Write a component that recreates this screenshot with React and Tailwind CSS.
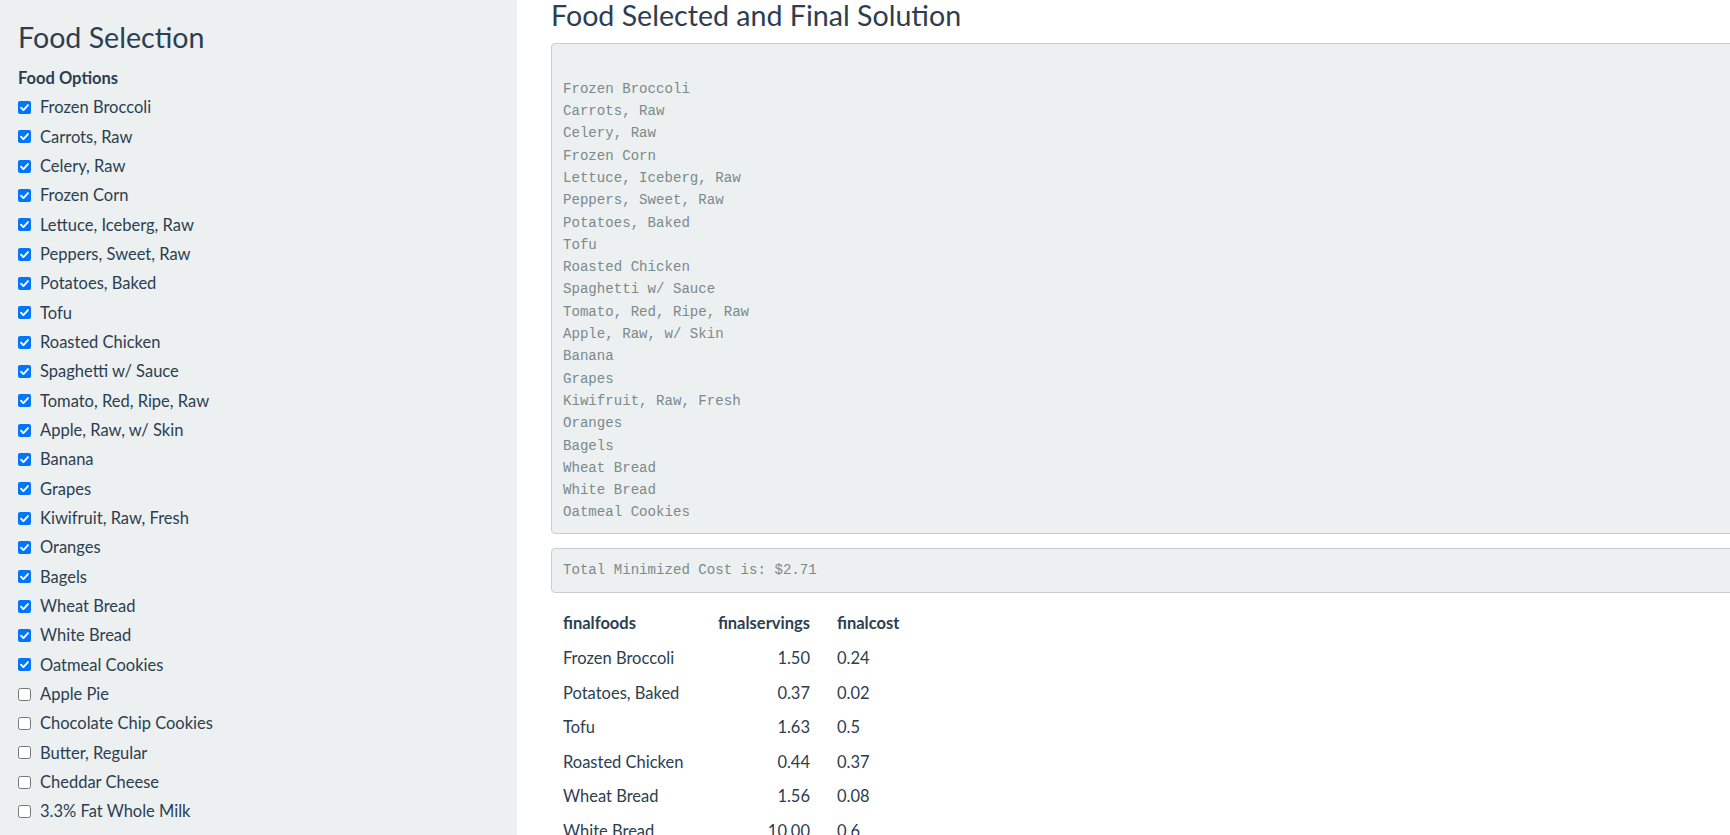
import React from "react";

const options = [
  ["Frozen Broccoli", true],
  ["Carrots, Raw", true],
  ["Celery, Raw", true],
  ["Frozen Corn", true],
  ["Lettuce, Iceberg, Raw", true],
  ["Peppers, Sweet, Raw", true],
  ["Potatoes, Baked", true],
  ["Tofu", true],
  ["Roasted Chicken", true],
  ["Spaghetti w/ Sauce", true],
  ["Tomato, Red, Ripe, Raw", true],
  ["Apple, Raw, w/ Skin", true],
  ["Banana", true],
  ["Grapes", true],
  ["Kiwifruit, Raw, Fresh", true],
  ["Oranges", true],
  ["Bagels", true],
  ["Wheat Bread", true],
  ["White Bread", true],
  ["Oatmeal Cookies", true],
  ["Apple Pie", false],
  ["Chocolate Chip Cookies", false],
  ["Butter, Regular", false],
  ["Cheddar Cheese", false],
  ["3.3% Fat Whole Milk", false],
];

const rows = [
  ["Frozen Broccoli", "1.50", "0.24"],
  ["Potatoes, Baked", "0.37", "0.02"],
  ["Tofu", "1.63", "0.5"],
  ["Roasted Chicken", "0.44", "0.37"],
  ["Wheat Bread", "1.56", "0.08"],
  ["White Bread", "10.00", "0.6"],
];

function CheckIcon({ checked }) {
  if (checked) {
    return (
      <svg width="13" height="13" viewBox="0 0 13 13" className="shrink-0">
        <rect x="0" y="0" width="13" height="13" rx="2" fill="#0075ff" />
        <path d="M3 6.7 L5.4 9.1 L10 4.1" fill="none" stroke="#fff" strokeWidth="1.9" strokeLinecap="round" strokeLinejoin="round" />
      </svg>
    );
  }
  return (
    <svg width="13" height="13" viewBox="0 0 13 13" className="shrink-0">
      <rect x="0.5" y="0.5" width="12" height="12" rx="2" fill="#fff" stroke="#767676" strokeWidth="1" />
    </svg>
  );
}

export default function App() {
  const selected = options.filter((o) => o[1]).map((o) => o[0]);
  return (
    <div
      className="flex w-[1730px] h-[835px] overflow-hidden bg-white text-[#2c3e50]"
      style={{ fontFamily: "Lato, 'Open Sans', sans-serif" }}
    >
      <aside className="w-[517px] shrink-0 h-full bg-[#ecf0f1] pl-[18px] pt-[22px] overflow-hidden">
        <h3 className="text-[28.6px] leading-[31.5px] font-normal">Food Selection</h3>
        <div className="mt-[13px] text-[16.5px] leading-[23.5px] font-bold">Food Options</div>
        <div className="mt-[3px] flex flex-col">
          {options.map(([name, checked]) => (
            <label key={name} className="h-[29.33px] flex items-center text-[16.5px]">
              <CheckIcon checked={checked} />
              <span className="ml-[9px]">{name}</span>
            </label>
          ))}
        </div>
      </aside>

      <main className="ml-[34px] w-[1220px] shrink-0">
        <h3 className="text-[28.6px] leading-[31.5px] font-normal">Food Selected and Final Solution</h3>
        <pre
          className="mt-[11.5px] border border-[#cccccc] rounded-[4px] bg-[#ecf0f1] text-[#7b8a8b] px-[11px] pt-[11.5px] pb-[9.5px] text-[14.1px] leading-[22.3px]"
          style={{ fontFamily: "'Liberation Mono', 'DejaVu Sans Mono', monospace" }}
        >
          {"\n" + selected.join("\n")}
        </pre>
        <pre
          className="mt-[14px] border border-[#cccccc] rounded-[4px] bg-[#ecf0f1] text-[#7b8a8b] px-[11px] py-[10px] text-[14.1px] leading-[22.3px]"
          style={{ fontFamily: "'Liberation Mono', 'DejaVu Sans Mono', monospace" }}
        >
          Total Minimized Cost is: $2.71
        </pre>
        <div className="mt-[14px] pl-[12px] text-[16.5px]">
          <div className="flex h-[34.6px] items-center font-bold">
            <div className="w-[126px]">finalfoods</div>
            <div className="w-[121px] text-right">finalservings</div>
            <div className="ml-[27px]">finalcost</div>
          </div>
          {rows.map(([f, s, c]) => (
            <div key={f} className="flex h-[34.6px] items-center">
              <div className="w-[126px]">{f}</div>
              <div className="w-[121px] text-right">{s}</div>
              <div className="ml-[27px]">{c}</div>
            </div>
          ))}
        </div>
      </main>
    </div>
  );
}
